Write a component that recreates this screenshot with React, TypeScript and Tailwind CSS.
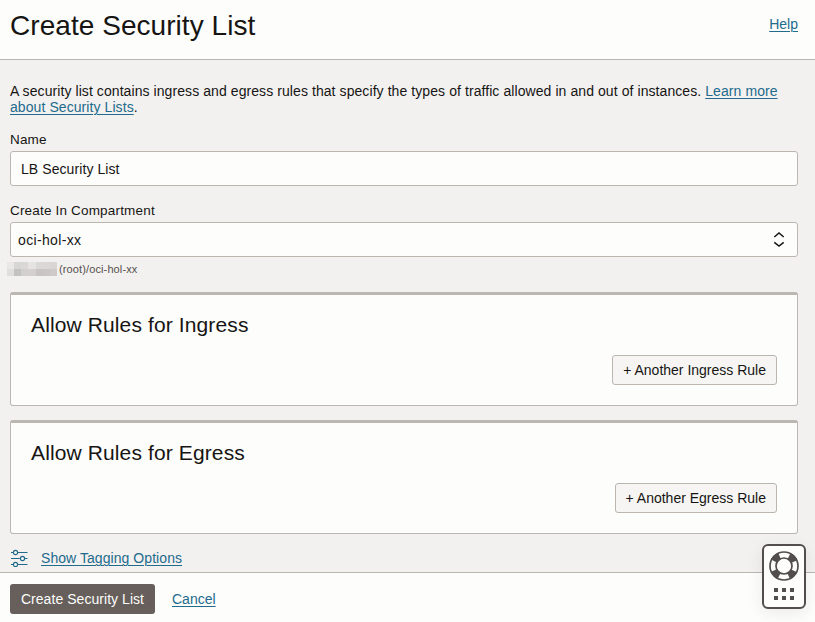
const link = "text-[#226b8c] underline underline-offset-[1.5px] decoration-1";

const mosaic = [
  ["#e9e8e7", "#d8d6d5", "#dad8d7", "#e5e4e3", "#dbd9d8", "#dad7d6", "#d8d5d4"],
  ["#dfdedd", "#c4c2c1", "#d2d0cf", "#d3d0cf", "#c7c4c3", "#c9c6c5", "#cdcac9"],
];

function Mosaic() {
  return (
    <div className="grid h-[14px] w-[50px] grid-cols-7 grid-rows-2">
      {mosaic.flat().map((color, i) => (
        <span key={i} style={{ backgroundColor: color }} />
      ))}
    </div>
  );
}

function UpDown() {
  return (
    <svg width="12" height="16" viewBox="0 0 12 16" fill="none" stroke="#161513" strokeWidth="1.5">
      <path d="M1.300 5 6 1l4.700 4M1.300 10.300 6 14l4.700-3.700" />
    </svg>
  );
}

function Sliders() {
  return (
    <svg width="18" height="18" viewBox="0 0 18 18" fill="none" stroke="#226b8c" strokeWidth="1.1">
      <path d="M1 3.500h2.200M7.800 3.500H17.500M1 9.500h8.800M14.600 9.500H17.500M1 15.500h2.200M7.800 15.500H17.500" />
      <circle cx="5.500" cy="3.500" r="2.100" />
      <circle cx="12.500" cy="9.500" r="2.100" />
      <circle cx="5.500" cy="15.500" r="2.100" />
    </svg>
  );
}

function LifeRing() {
  return (
    <svg width="30" height="30" viewBox="0 0 30 30" fill="none" stroke="#524e4b">
      <circle cx="15" cy="15" r="11" strokeWidth="7" strokeDasharray="7.500 9.780" strokeDashoffset="-4.890" />
      <circle cx="15" cy="15" r="14" strokeWidth="1.700" />
      <circle cx="15" cy="15" r="8" strokeWidth="1.700" />
    </svg>
  );
}

function RuleCard({ title, action }: { title: string; action: string }) {
  return (
    <section className="flex h-[114px] flex-col rounded-[3px] border border-t-[3px] border-[#bcb6b1] bg-[#fdfdfb] px-5 pt-4">
      <h2 className="text-[21px] leading-7 tracking-[0.120px]">{title}</h2>
      <button className="mt-4 h-[30px] self-end rounded-[3px] border border-[#bcb6b1] bg-[#f6f5f4] px-[10px] text-[14px] leading-none whitespace-nowrap">
        {action}
      </button>
    </section>
  );
}

export default function App() {
  return (
    <div className="relative flex h-[622px] w-[815px] flex-col overflow-hidden bg-[#f3f1f0] font-['Liberation_Sans',Arial,sans-serif] text-[14px] text-[#161513]">
      <header className="flex h-[60px] shrink-0 items-start justify-between border-b border-[#b9b5b1] bg-[#fdfdfb] pr-[17px] pl-[10px]">
        <h1 className="pt-[10px] text-[28px] leading-8 tracking-[0.050px]">Create Security List</h1>
        <a className={`${link} pt-4 leading-4`}>Help</a>
      </header>
      <main className="h-[512px] shrink-0 pr-[17px] pl-[10px]">
        <p className="pt-[23px] leading-4 tracking-[0.078px] whitespace-nowrap">
          A security list contains ingress and egress rules that specify the types of traffic allowed in and out of instances. <a className={link}>Learn more</a>
          <br />
          <a className={link}>about Security Lists</a>.
        </p>
        <div className="mt-4 text-[13.500px] leading-[18px] tracking-[0.180px]">Name</div>
        <div className="mt-[2px] flex h-[35px] items-center rounded-[3px] border border-[#bcb6b1] bg-[#fdfdfb] px-[10px] pt-[2px] tracking-[0.080px]">LB Security List</div>
        <div className="mt-4 text-[13.500px] leading-[18px] tracking-[0.180px]">Create In Compartment</div>
        <div className="mt-[2px] flex h-[35px] items-center justify-between rounded-[3px] border border-[#bcb6b1] bg-[#fdfdfb] pr-[12px] pl-[7px]">
          <span className="pt-[2px] tracking-[0.350px]">oci-hol-xx</span>
          <UpDown />
        </div>
        <div className="mt-[5px] -ml-[3px] flex h-[14px] items-center gap-[2px] text-[11px] leading-none tracking-[0.120px] text-[#54504d]">
          <Mosaic />
          <span>(root)/oci-hol-xx</span>
        </div>
        <div className="mt-4 flex flex-col gap-[14px]">
          <RuleCard title="Allow Rules for Ingress" action="+ Another Ingress Rule" />
          <RuleCard title="Allow Rules for Egress" action="+ Another Egress Rule" />
        </div>
        <div className="mt-[15px] flex h-[18px] items-center gap-[13px]">
          <Sliders />
          <a className={`${link} leading-4 tracking-[0.060px]`}>Show Tagging Options</a>
        </div>
      </main>
      <footer className="flex h-[50px] shrink-0 items-start gap-[17px] border-t border-[#bcb6b1] bg-[#fdfdfb] pt-[11px] pl-[10px]">
        <button className="h-[30px] w-[145px] rounded-[3px] bg-[#665f5b] leading-none tracking-[0.050px] whitespace-nowrap text-[#fdfdfb]">Create Security List</button>
        <a className={`${link} pt-[7px] leading-4`}>Cancel</a>
      </footer>
      <aside className="absolute top-[544px] left-[762px] flex h-[65px] w-[44px] flex-col items-center rounded-md border-2 border-[#524e4b] bg-[#fdfdfb] pt-[5px] shadow-[0_4px_16px_rgba(0,0,0,0.08)]">
        <LifeRing />
        <div className="mt-[7px] grid grid-cols-3 gap-1">
          {Array.from({ length: 6 }, (_, i) => (
            <span key={i} className="size-1 bg-[#524e4b]" />
          ))}
        </div>
      </aside>
    </div>
  );
}
